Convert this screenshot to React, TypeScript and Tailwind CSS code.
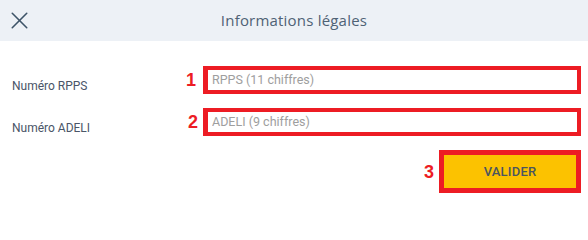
import { X } from "lucide-react";

const fields = [
  { label: "Numéro RPPS", placeholder: "RPPS (11 chiffres)", num: "1", numPad: "pl-[2px]" },
  { label: "Numéro ADELI", placeholder: "ADELI (9 chiffres)", num: "2", numPad: "pl-[4px]" },
];

export default function App() {
  return (
    <div className="w-[588px] h-[213px] bg-white overflow-hidden" style={{ fontFamily: "Roboto, 'Liberation Sans', sans-serif" }}>
      {/* Header */}
      <div className="h-[41px] bg-[#edf1f6] grid grid-cols-[1fr_auto_1fr] items-center">
        <div className="pl-[5px] flex items-center">
          <X size={29} strokeWidth={1.3} color="#3e5468" />
        </div>
        <h1
          className="text-[15px] text-[#4f6275] tracking-[0.2px]"
          style={{ fontFamily: "'Open Sans', 'Noto Sans', sans-serif" }}
        >
          Informations légales
        </h1>
        <div />
      </div>

      {/* Form */}
      <div className="pt-[25px] pr-[7px]">
        {fields.map((f, i) => (
          <div key={i} className="flex items-center h-[28px] mb-[14px]">
            <span className="w-[184px] pl-[12px] pt-[12px] text-[12px] leading-[16px] text-[#4a5568]">{f.label}</span>
            <span
              className={`w-[19px] ${f.numPad} text-[18px] font-bold text-[#ed1c24] leading-none`}
              style={{ fontFamily: "'Liberation Sans', sans-serif" }}
            >
              {f.num}
            </span>
            <div className="flex-1 h-[28px] border-4 border-l-[5px] border-[#ed1c24] bg-white flex items-center pl-[4px]">
              <input
                className="w-full text-[12.5px] text-[#555] placeholder:text-[#9e9e9e] outline-none bg-transparent"
                placeholder={f.placeholder}
              />
            </div>
          </div>
        ))}

        <div className="flex justify-end items-center">
          <span
            className="w-[15px] text-[18px] font-bold text-[#ed1c24] leading-none"
            style={{ fontFamily: "'Liberation Sans', sans-serif" }}
          >
            3
          </span>
          <div className="w-[142px] h-[43px] border-[5px] border-[#ed1c24]">
            <button className="w-full h-full bg-[#fcc200] text-[13px] font-medium text-[#4a5560] tracking-[0.2px]">
              VALIDER
            </button>
          </div>
        </div>
      </div>
    </div>
  );
}
